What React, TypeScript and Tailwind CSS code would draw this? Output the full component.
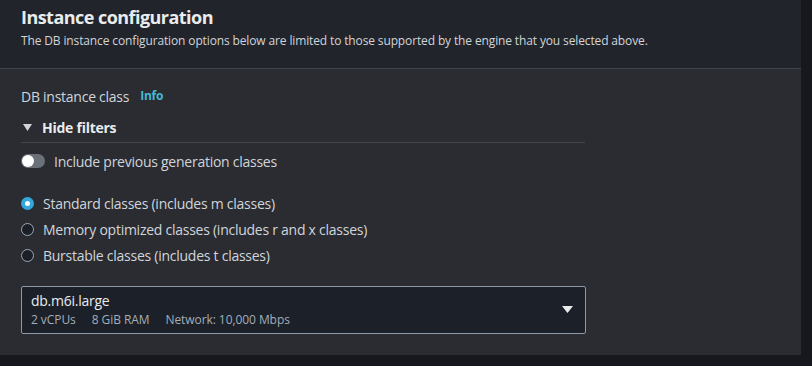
import React from "react";

export default function App() {
  return (
    <div className="w-[812px] h-[366px] bg-[#16181d] overflow-hidden tracking-[-0.016em]" style={{ fontFamily: '"Open Sans", "Noto Sans", sans-serif' }}>
      <div className="w-[801px] h-[355px] bg-[#2a2c31] flex flex-col">
        <div className="bg-[#21242a] h-[69px] border-b border-[#41454d] px-[21px] pt-[5px]">
          <h2 className="text-[18px] leading-[24px] font-bold text-[#e9ebed] tracking-[-0.03em]">Instance configuration</h2>
          <p className="text-[12px] leading-[16px] text-[#d1d5db] mt-[4px] tracking-[-0.011em]">
            The DB instance configuration options below are limited to those supported by the engine that you selected above.
          </p>
        </div>
        <div className="px-[21px] pt-[18px]">
          <div className="flex items-center gap-[11px] h-[18px]">
            <span className="text-[14px] text-[#d1d5db]">DB instance class</span>
            <span className="text-[12px] font-bold text-[#44b9d6]">Info</span>
          </div>
          <div className="w-[564px] border-b border-[#414750] mt-[12px] pb-[4px] flex items-center gap-[10px] h-[26px]">
            <svg width="9" height="8" viewBox="0 0 9 8" className="ml-[2px]">
              <path d="M0 0 H9 L4.5 7 Z" fill="#d1d5db" />
            </svg>
            <span className="text-[14px] font-bold text-[#e9ebed]">Hide filters</span>
          </div>
          <div className="flex items-center gap-[9px] mt-[8px] h-[20px]">
            <div className="w-[24px] h-[14px] rounded-full bg-[#6b7178] relative">
              <div className="absolute left-[1px] top-[1px] w-[12px] h-[12px] rounded-full bg-white" />
            </div>
            <span className="text-[14px] text-[#d1d5db]">Include previous generation classes</span>
          </div>
          <div className="mt-[22px] flex flex-col gap-[6px]">
            {[
              ["Standard classes (includes m classes)", true],
              ["Memory optimized classes (includes r and x classes)", false],
              ["Burstable classes (includes t classes)", false],
            ].map(([label, sel]) => (
              <div key={label as string} className="flex items-center gap-[9px] h-[20px]">
                {sel ? (
                  <div className="w-[13px] h-[13px] rounded-full bg-[#33a7d9] flex items-center justify-center">
                    <div className="w-[5px] h-[5px] rounded-full bg-white" />
                  </div>
                ) : (
                  <div className="w-[13px] h-[13px] rounded-full border-[1.5px] border-[#9ba7b6] bg-[#1b1f26]" />
                )}
                <span className="text-[14px] text-[#d1d5db]">{label as string}</span>
              </div>
            ))}
          </div>
          <div className="mt-[21px] w-[565px] h-[48px] border border-[#8d99a8] rounded-[2px] bg-[#1b2029] flex items-center pl-[9px] pr-[12px]">
            <div className="flex-1 flex flex-col">
              <span className="text-[14px] leading-[18px] text-[#e9ebed]">db.m6i.large</span>
              <div className="flex gap-[16px] text-[12px] leading-[16px] text-[#a4adb8] mt-[2px] tracking-[-0.006em]">
                <span>2 vCPUs</span>
                <span>8 GiB RAM</span>
                <span>Network: 10,000 Mbps</span>
              </div>
            </div>
            <svg width="11" height="8" viewBox="0 0 11 8">
              <path d="M0 0 H11 L5.5 7 Z" fill="#e9ebed" />
            </svg>
          </div>
        </div>
      </div>
    </div>
  );
}
